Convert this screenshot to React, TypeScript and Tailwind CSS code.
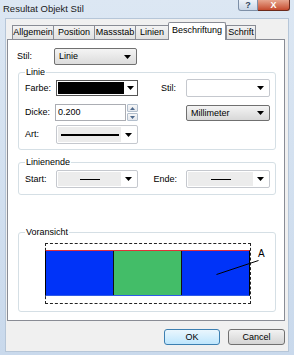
import React from 'react'

const Arrow = () => (
  <svg width="7" height="4" viewBox="0 0 7 4" className="shrink-0">
    <path d="M0 0h7L3.5 4z" fill="#000" />
  </svg>
)

const tabs = [
  { label: 'Allgemein', cls: 'w-[42px]' },
  { label: 'Position', cls: 'w-[42px]' },
  { label: 'Massstab', cls: 'w-[42px]' },
  { label: 'Linien', cls: 'w-[34px]' },
  { label: 'Beschriftung', cls: 'w-[58px]', active: true },
  { label: 'Schrift', cls: 'w-[30px]' },
]

function Group({ title, cls, children }: { title: string; cls: string; children?: React.ReactNode }) {
  return (
    <div className={`relative ml-[10px] w-[258px] border border-[#d5dfe5] rounded-[3px] ${cls}`}>
      <span className="absolute -top-[6px] left-[6px] bg-white px-[1px] leading-[11px]">{title}</span>
      {children}
    </div>
  )
}

// combo with a line sample inside (Art, Start, Ende)
function LineCombo({ w, thick }: { w: string; thick?: boolean }) {
  return (
    <div className={`${w} h-full border border-[#c5c8ce] rounded-[2px] bg-white flex items-center p-[1px]`}>
      <div className="flex-1 h-full bg-[#ececec] flex items-center justify-center">
        {thick ? <div className="w-[58px] h-[2px] bg-black" /> : <div className="w-[20px] h-px bg-black" />}
      </div>
      <div className="w-[15px] flex justify-center">
        <Arrow />
      </div>
    </div>
  )
}

export default function App() {
  return (
    <div className="w-[294px] h-[355px] overflow-hidden bg-gradient-to-b from-[#dce7f3] to-[#c9d9ec] flex flex-col font-['Liberation_Sans',Arial,sans-serif] text-[9px] leading-none text-black">
      {/* title bar */}
      <div className="h-[18px] shrink-0 flex justify-between items-start">
        <span className="pl-[3px] pt-[4px] text-[9.5px] text-[#1b1b1b]">Resultat Objekt Stil</span>
        <div className="flex pr-[4px]">
          <div className="w-[20px] h-[11px] border border-[#7d8fa7] border-t-0 rounded-bl-[3px] bg-gradient-to-b from-[#eef3f9] to-[#c9d6e6] flex items-center justify-center text-[9px] font-bold text-[#33475f]">
            ?
          </div>
          <div className="w-[32px] h-[11px] border border-[#6b2a1c] border-t-0 border-l-0 rounded-br-[3px] bg-gradient-to-b from-[#e6a58e] to-[#c44a2d] flex items-center justify-center text-[9px] font-bold text-white">
            X
          </div>
        </div>
      </div>

      {/* client area */}
      <div className="mx-[5px] mb-[3px] flex-1 bg-[#f0f0f0] border border-[#b6c6d8] flex flex-col">
        {/* tabs */}
        <div className="mt-[4px] pl-[6px] h-[17px] flex items-end relative z-10 -mb-px">
          {tabs.map((t) =>
            t.active ? (
              <div
                key={t.label}
                className={`${t.cls} h-[18px] bg-white border border-b-0 border-[#898c95] rounded-t-[2px] flex items-center justify-center pb-[2px]`}
              >
                {t.label}
              </div>
            ) : (
              <div
                key={t.label}
                className={`${t.cls} h-[14px] mb-px bg-gradient-to-b from-[#f3f3f3] to-[#e1e1e1] border border-b-0 border-[#898c95] -mr-px flex items-center justify-center`}
              >
                {t.label}
              </div>
            )
          )}
        </div>

        {/* tab panel */}
        <div className="ml-px w-[278px] h-[282px] shrink-0 bg-white border border-[#898c95] flex flex-col">
          {/* Stil */}
          <div className="mt-[8px] pl-[9px] h-[17px] flex items-center">
            <span className="w-[37px]">Stil:</span>
            <div className="w-[83px] h-full border border-[#707070] rounded-[2px] bg-gradient-to-b from-[#f4f4f4] to-[#dcdcdc] flex items-center justify-between pl-[4px] pr-[5px]">
              <span>Linie</span>
              <Arrow />
            </div>
          </div>

          {/* Linie */}
          <Group title="Linie" cls="mt-[7px] h-[78px] flex">
            <div className="pl-[6px] flex flex-col">
              <div className="mt-[7px] h-[16px] flex items-center">
                <span className="w-[31px]">Farbe:</span>
                <div className="w-[82px] h-full border border-[#555] bg-white flex items-center p-[1px]">
                  <div className="flex-1 h-full bg-black" />
                  <div className="w-[12px] flex justify-center">
                    <Arrow />
                  </div>
                </div>
              </div>
              <div className="mt-[8px] h-[17px] flex items-center">
                <span className="w-[30px]">Dicke:</span>
                <div className="w-[71px] h-full border border-[#abadb3] bg-white flex items-center pl-[2px]">0.200</div>
                <div className="ml-px w-[11px] h-full flex flex-col gap-px">
                  <div className="flex-1 border border-[#b3bfcd] rounded-[1px] bg-gradient-to-b from-[#f6f6f6] to-[#e4e8ee] flex items-center justify-center">
                    <svg width="5" height="3" viewBox="0 0 5 3"><path d="M0 3h5L2.5 0z" fill="#4f6a8c" /></svg>
                  </div>
                  <div className="flex-1 border border-[#b3bfcd] rounded-[1px] bg-gradient-to-b from-[#f6f6f6] to-[#e4e8ee] flex items-center justify-center">
                    <svg width="5" height="3" viewBox="0 0 5 3"><path d="M0 0h5L2.5 3z" fill="#4f6a8c" /></svg>
                  </div>
                </div>
              </div>
              <div className="mt-[4px] h-[19px] flex items-center">
                <span className="w-[31px]">Art:</span>
                <LineCombo w="w-[82px]" thick />
              </div>
            </div>
            <div className="ml-auto pr-[5px] flex flex-col items-end">
              <div className="mt-[6px] h-[18px] flex items-center">
                <span className="mr-[10px]">Stil:</span>
                <div className="w-[84px] h-full border border-[#c5c8ce] rounded-[2px] bg-white flex items-center justify-end pr-[5px]">
                  <Arrow />
                </div>
              </div>
              <div className="mt-[8px] w-[84px] h-[16px] border border-[#707070] rounded-[2px] bg-gradient-to-b from-[#f4f4f4] to-[#d8d8d8] flex items-center justify-between pl-[4px] pr-[5px]">
                <span>Millimeter</span>
                <Arrow />
              </div>
            </div>
          </Group>

          {/* Linienende */}
          <Group title="Linienende" cls="mt-[12px] h-[33px] flex items-start">
            <div className="mt-[7px] pl-[6px] h-[18px] flex items-center">
              <span className="w-[31px]">Start:</span>
              <LineCombo w="w-[82px]" />
            </div>
            <div className="ml-auto mt-[7px] pr-[5px] h-[18px] flex items-center">
              <span className="mr-[9px]">Ende:</span>
              <LineCombo w="w-[84px]" />
            </div>
          </Group>

          {/* Voransicht */}
          <Group title="Voransicht" cls="mt-[37px] h-[80px]">
            <div className="mt-[10px] ml-[26px] w-[206px] h-[61px] border border-dashed border-[#222]">
              <div className="-ml-px mt-[6px] w-[205px] h-[46px] border-l border-r border-black border-t border-t-[#e0323a] border-b border-b-[#2f5be6] flex">
                <div className="w-[67px] bg-[#0033f8]" />
                <div className="w-px bg-[#111]" />
                <div className="w-[67px] bg-[#43bd68]" />
                <div className="w-px bg-[#111]" />
                <div className="flex-1 bg-[#0033f8]" />
              </div>
            </div>
            <svg className="absolute left-0 top-0" width="258" height="80">
              <path d="M197.5 41.5L239.5 27.5" stroke="#000" strokeWidth="1" fill="none" />
            </svg>
            <span className="absolute left-[239px] top-[16px] text-[10px]">A</span>
          </Group>
        </div>

        {/* buttons */}
        <div className="mt-[8px] pr-[3px] flex justify-end gap-[8px]">
          <div className="w-[56px] h-[16px] border border-[#3c7fb1] rounded-[3px] bg-gradient-to-b from-[#eaf6fd] to-[#bee6fd] flex items-center justify-center">
            OK
          </div>
          <div className="w-[57px] h-[16px] border border-[#707070] rounded-[3px] bg-gradient-to-b from-[#f2f2f2] to-[#d4d4d4] flex items-center justify-center">
            Cancel
          </div>
        </div>
      </div>
    </div>
  )
}
